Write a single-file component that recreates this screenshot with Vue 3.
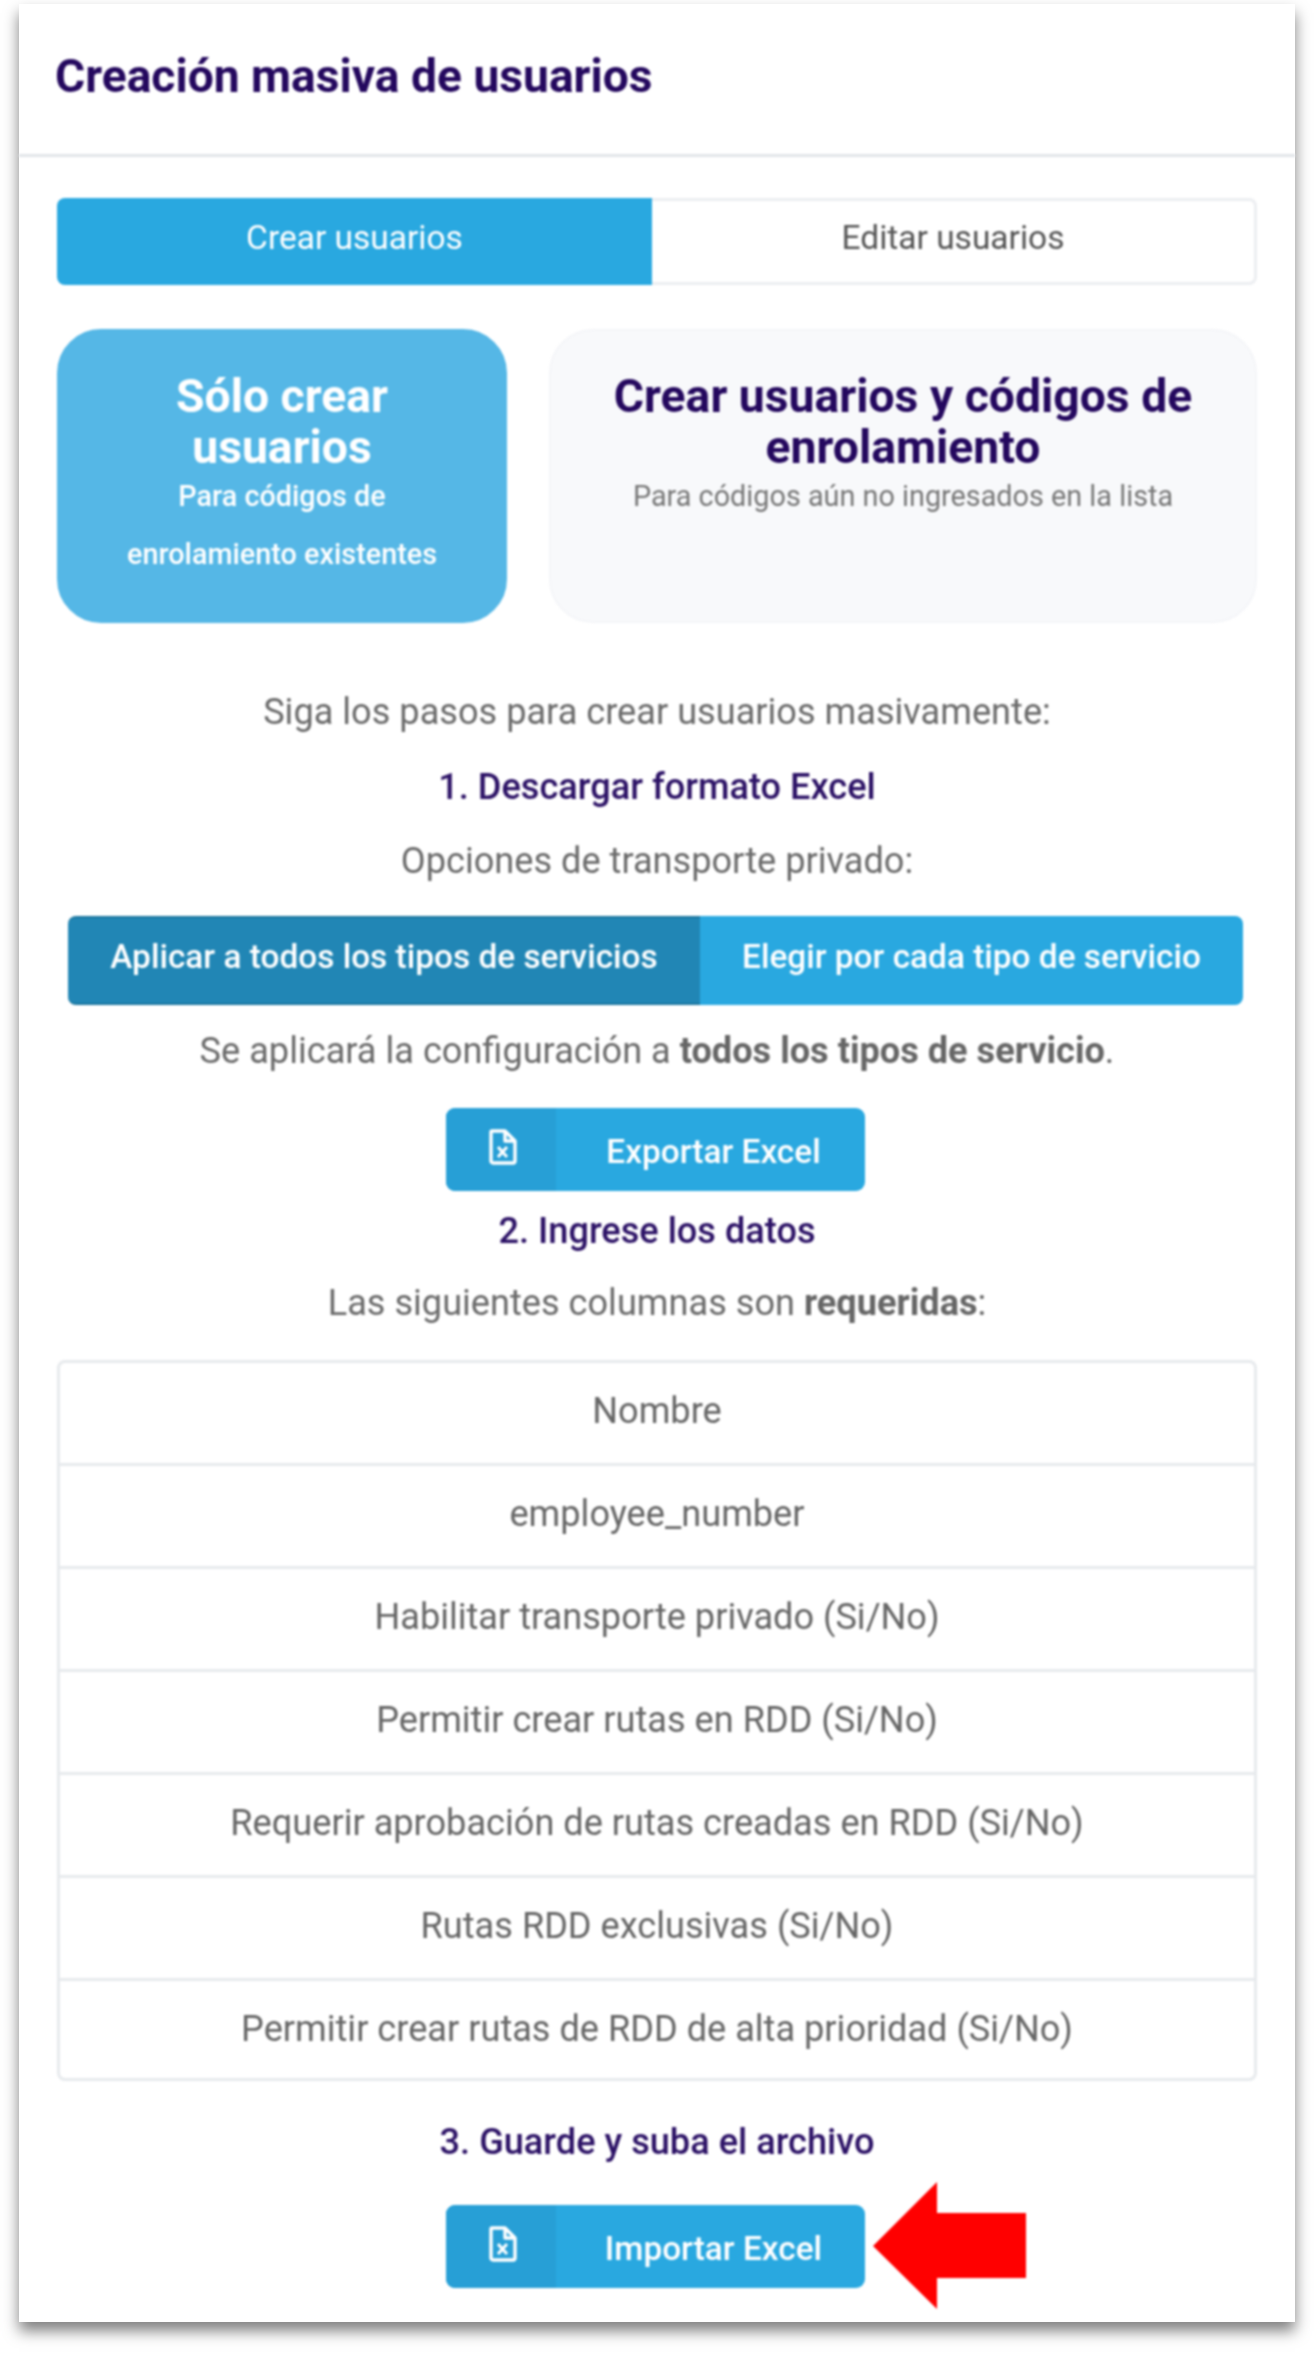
<script setup>
import { ref } from "vue";

const mainTab = ref("crear");
const mode = ref("solo");
const scope = ref("todos");

const columns = [
  "Nombre",
  "employee_number",
  "Habilitar transporte privado (Si/No)",
  "Permitir crear rutas en RDD (Si/No)",
  "Requerir aprobación de rutas creadas en RDD (Si/No)",
  "Rutas RDD exclusivas (Si/No)",
  "Permitir crear rutas de RDD de alta prioridad (Si/No)",
];
</script>

<template>
  <div class="page">
    <div class="card">
      <div class="card-head">
        <h1>Creación masiva de usuarios</h1>
      </div>
      <div class="card-body">
        <div class="tabs">
          <button class="tab" :class="{ active: mainTab === 'crear' }" @click="mainTab = 'crear'">Crear usuarios</button>
          <button class="tab" :class="{ active: mainTab === 'editar' }" @click="mainTab = 'editar'">Editar usuarios</button>
        </div>

        <div class="modes">
          <div class="mode mode-left" :class="{ selected: mode === 'solo' }" @click="mode = 'solo'">
            <h2>Sólo crear usuarios</h2>
            <p>Para códigos de enrolamiento existentes</p>
          </div>
          <div class="mode mode-right" :class="{ selected: mode === 'ambos' }" @click="mode = 'ambos'">
            <h2>Crear usuarios y códigos de enrolamiento</h2>
            <p>Para códigos aún no ingresados en la lista</p>
          </div>
        </div>

        <p class="line intro">Siga los pasos para crear usuarios masivamente:</p>
        <p class="line step step-one">1. Descargar formato Excel</p>
        <p class="line options">Opciones de transporte privado:</p>

        <div class="segment">
          <button class="seg seg-all" :class="{ active: scope === 'todos' }" @click="scope = 'todos'">Aplicar a todos los tipos de servicios</button>
          <button class="seg seg-each" :class="{ active: scope === 'cada' }" @click="scope = 'cada'">Elegir por cada tipo de servicio</button>
        </div>

        <p class="line note">Se aplicará la configuración a <b>todos los tipos de servicio</b>.</p>

        <button class="excel-btn export">
          <span class="excel-icon">
            <svg width="28" height="36" viewBox="0 0 28 36" fill="none" stroke="#fff" stroke-width="3.4" stroke-linejoin="round">
              <path d="M3 2h13l10 10v20a2 2 0 0 1-2 2H4a2 2 0 0 1-2-2V3a1 1 0 0 1 1-1z" />
              <path d="M16 2v10h10" />
              <path d="M9 18l9 10M18 18l-9 10" stroke-width="3" />
            </svg>
          </span>
          <span class="excel-label">Exportar Excel</span>
        </button>

        <p class="line step step-two">2. Ingrese los datos</p>
        <p class="line required">Las siguientes columnas son <b>requeridas</b>:</p>

        <ul class="columns">
          <li v-for="col in columns" :key="col">{{ col }}</li>
        </ul>

        <p class="line step step-three">3. Guarde y suba el archivo</p>

        <div class="import-wrap">
          <button class="excel-btn">
            <span class="excel-icon">
              <svg width="28" height="36" viewBox="0 0 28 36" fill="none" stroke="#fff" stroke-width="3.4" stroke-linejoin="round">
                <path d="M3 2h13l10 10v20a2 2 0 0 1-2 2H4a2 2 0 0 1-2-2V3a1 1 0 0 1 1-1z" />
                <path d="M16 2v10h10" />
                <path d="M9 18l9 10M18 18l-9 10" stroke-width="3" />
              </svg>
            </span>
            <span class="excel-label">Importar Excel</span>
          </button>
          <svg class="red-arrow" width="153" height="127" viewBox="0 0 153 127">
            <polygon points="0,64 64,0 64,31 153,31 153,96 64,96 64,127" fill="#ff0000" />
          </svg>
        </div>
      </div>
    </div>
  </div>
</template>

<style>
html,
body {
  margin: 0;
  background: #fff;
}
</style>

<style scoped>
.page {
  width: 1314px;
  height: 2355px;
  padding: 4px 19px 0;
  box-sizing: border-box;
  font-family: Roboto, "Liberation Sans", sans-serif;
  overflow: hidden;
}
.card {
  width: 1276px;
  height: 2318px;
  background: #fff;
  box-shadow: 0 9px 14px rgba(0, 0, 0, 0.5);
}
.card-head {
  height: 153px;
  box-sizing: border-box;
  padding: 0 36px;
  display: flex;
  align-items: center;
  border-bottom: 3px solid #e2e5e9;
  margin-bottom: 41px;
  filter: blur(0.9px);
}
h1 {
  margin: 0;
  padding-bottom: 6px;
  font-size: 46.2px;
  font-weight: 700;
  color: #24085e;
}
.card-body {
  padding: 0 38px;
  filter: blur(0.9px);
}
.tabs {
  display: flex;
  height: 87px;
  margin-bottom: 44px;
}
.tab {
  flex: 1 1 0;
  margin: 0;
  font: 400 33.5px Roboto, sans-serif;
  padding: 0 0 8px;
  color: #555;
  background: #fff;
  border: 3px solid #eceef1;
  border-left: none;
  border-radius: 0 8px 8px 0;
}
.tab.active {
  flex: 0 0 595px;
  color: #fff;
  background: #29a8e0;
  border: none;
  border-radius: 8px 0 0 8px;
}
.modes {
  display: flex;
  justify-content: space-between;
  margin-bottom: 66px;
}
.mode {
  height: 294px;
  box-sizing: border-box;
  border-radius: 44px;
  padding: 40px 30px 0;
  text-align: center;
  background: #f8f9fb;
  border: 2px solid #f4f5f8;
}
.mode-left {
  width: 450px;
  padding-left: 60px;
  padding-right: 60px;
}
.mode-right {
  width: 708px;
}
.mode h2 {
  margin: 0 0 -6px;
  font-size: 46.3px;
  line-height: 51px;
  font-weight: 700;
  color: #24085e;
}
.mode p {
  margin: 0;
  font-size: 28.8px;
  line-height: 58px;
  color: #777;
}
.mode.selected {
  background: #55b7e6;
  border-color: #55b7e6;
}
.mode.selected h2 {
  color: #fff;
}
.mode.selected p {
  color: #fff;
  font-weight: 500;
}
.line {
  margin: 0;
  font-size: 36.15px;
  line-height: 45px;
  text-align: center;
  color: #6a6a6a;
}
.line b {
  color: #666;
}
.step {
  color: #2c1266;
  font-weight: 500;
}
.step-one {
  margin-top: 30px;
}
.options {
  margin-top: 29px;
}
.segment {
  display: flex;
  height: 89px;
  margin: 33px 14px 23px 11px;
}
.seg {
  margin: 0;
  padding: 0 0 8px;
  border: none;
  font: 500 33.4px Roboto, sans-serif;
  color: #fff;
  background: #29a8e0;
}
.seg-all {
  flex: 0 0 632px;
  border-radius: 8px 0 0 8px;
}
.seg-each {
  flex: 1 1 0;
  border-radius: 0 8px 8px 0;
}
.seg.active {
  background: #2186b5;
  border-top: 2px solid #1a769f;
  border-bottom: 2px solid #1a769f;
}
.excel-btn {
  display: flex;
  width: 419px;
  height: 83px;
  padding: 0;
  border: none;
  border-radius: 9px;
  overflow: hidden;
  background: #29a8e0;
  color: #fff;
}
.export {
  margin: 35px 0 17px 389px;
}
.excel-icon {
  flex: 0 0 110px;
  display: flex;
  align-items: flex-start;
  justify-content: center;
  padding: 21px 0 0 4px;
  box-sizing: border-box;
  background: #279fd6;
}
.excel-label {
  flex: 1 1 0;
  padding-left: 6px;
  text-align: center;
  font: 500 33.4px/88px Roboto, sans-serif;
}
.required {
  margin-top: 27px;
  margin-bottom: 35px;
}
.columns {
  list-style: none;
  margin: 0;
  padding: 0;
  border: 3px solid #e7eaed;
  border-radius: 8px;
}
.columns li {
  box-sizing: border-box;
  height: 103px;
  line-height: 96px;
  text-align: center;
  font-size: 36.15px;
  color: #666;
  border-bottom: 3px solid #e7eaed;
}
.columns li:last-child {
  height: 97px;
  border-bottom: none;
}
.step-three {
  margin-top: 38px;
  margin-bottom: 41px;
}
.import-wrap {
  position: relative;
  width: 419px;
  margin-left: 389px;
}
.red-arrow {
  position: absolute;
  left: 427px;
  top: -23px;
  filter: blur(0.3px);
}
</style>
